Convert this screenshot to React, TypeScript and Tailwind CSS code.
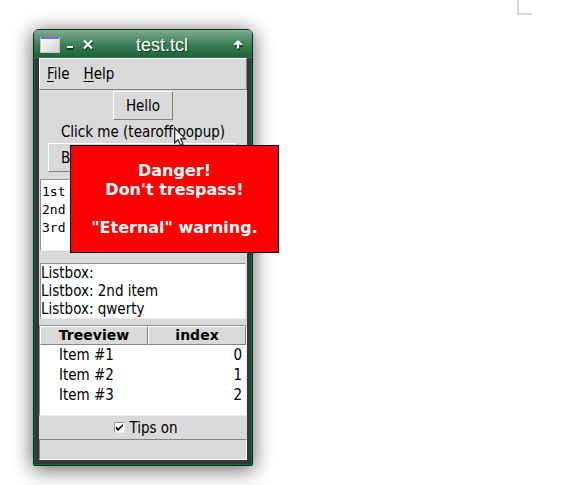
import { useState } from "react";

const rows = [
  { name: "Item #1", index: 0 },
  { name: "Item #2", index: 1 },
  { name: "Item #3", index: 2 },
];

const listItems = ["Listbox:", "Listbox: 2nd item", "Listbox: qwerty"];

const raised = "border border-t-white border-l-white border-r-[#828282] border-b-[#828282]";
const sunken = "border border-t-[#929292] border-l-[#929292] border-r-[#ebebeb] border-b-[#ebebeb]";

function TitleBar() {
  return (
    <header className="flex h-7 items-center rounded-t-sm border-t border-[#7fae90] bg-linear-to-b from-[#7aa98b] via-[#3d7f57] via-50% to-[#176235] pl-1.5 pr-2 shadow-[inset_0_-1px_0_#2c7a4b]">
      <svg width="20" height="17" viewBox="0 0 20 17" aria-hidden="true">
        <defs>
          <linearGradient id="face" x1="0" y1="0" x2="1" y2="1">
            <stop offset="0" stopColor="#ffffff" />
            <stop offset="1" stopColor="#cfcfcb" />
          </linearGradient>
        </defs>
        <rect x="0.5" y="0.5" width="19" height="16" fill="url(#face)" stroke="#c4c6c2" />
        <rect x="0" y="0" width="20" height="1" fill="#7c8798" />
        <rect x="1" y="1" width="18" height="2" fill="#5b84bd" />
      </svg>
      <button aria-label="Minimize" className="ml-1.5 flex h-5 w-2 items-center justify-center">
        <svg width="8" height="12" viewBox="0 0 8 12">
          <rect x="1" y="8" width="7" height="3" fill="#0c4422" />
          <rect x="1" y="7" width="6" height="2" fill="#fff" />
        </svg>
      </button>
      <button aria-label="Close" className="ml-2 flex h-5 w-3 items-center justify-center">
        <svg width="12" height="12" viewBox="0 0 12 12" fill="none">
          <path d="M2.500 2.500 10.500 10.500M10.500 2.500 2.500 10.500" stroke="#0c4422" strokeWidth="2.6" />
          <path d="M2 1.500 10 9.500M10 1.500 2 9.500" stroke="#fff" strokeWidth="2.2" />
        </svg>
      </button>
      <h1 className="grow pr-0.5 text-center font-['Liberation_Sans',sans-serif] text-lg leading-6 text-white [text-shadow:1px_1px_1px_#0a3d1e]">
        test.tcl
      </h1>
      <button aria-label="Maximize" className="flex h-5 w-3 items-center justify-center">
        <svg width="12" height="12" viewBox="0 0 12 12">
          <path d="M6.500 2.500 11 7 9.500 8.500 8 7.500V11H5V7.500L3.500 8.500 2 7Z" fill="#0c4422" />
          <path d="M6 1 10.300 5.200 9.300 6.300 7.200 5.200V9.500H4.800V5.200L2.700 6.300 1.700 5.200Z" fill="#fff" />
        </svg>
      </button>
    </header>
  );
}

export default function App() {
  const [tips, setTips] = useState(true);

  return (
    <main className="flex min-h-screen items-start justify-between overflow-hidden bg-white pl-[33px] pr-14 font-['DejaVu_Sans_Condensed','DejaVu_Sans',sans-serif] text-[15px] leading-[18px] text-black">
      <div className="relative mt-[29px] w-[220px]">
        <section className="rounded-t-md rounded-b-xs border border-[#05301a] bg-[#34383d] shadow-[0_3px_20px_1px_rgba(0,0,0,0.6)]">
          <TitleBar />
          <div className="border border-t-0 border-[#0b6b38] px-1 pb-1">
            <div className="bg-[#d9d9d9]">
              <nav className={`flex h-8 items-center gap-3.5 px-[7px] ${raised}`}>
                <button className="underline-offset-2">
                  <u>F</u>ile
                </button>
                <button className="underline-offset-2">
                  <u>H</u>elp
                </button>
              </nav>

              <div className="flex flex-col items-center px-[9px] pt-px">
                <button className={`h-[29px] w-[60px] ${raised}`}>Hello</button>
                <p className="h-[23px] pt-[3px] whitespace-nowrap">Click me (tearoff popup)</p>
                <button className={`h-[29px] w-full px-3 text-left ${raised}`}>B</button>
              </div>

              <div className="flex flex-col gap-3 px-px pt-[7px]">
                <textarea
                  aria-label="Text"
                  defaultValue={"1st\n2nd\n3rd"}
                  className={`block h-[72px] w-full resize-none overflow-hidden bg-white px-px pt-[3px] font-['DejaVu_Sans_Mono',monospace] text-[13px] leading-[18px] outline-none ${sunken}`}
                />
                <ul aria-label="Listbox" className={`h-14 bg-white ${sunken}`}>
                  {listItems.map((item) => (
                    <li key={item}>{item}</li>
                  ))}
                </ul>
              </div>

              <div className="mt-1.5 h-[91px] border border-t-[#929292] border-r-[#ebebeb] border-b-[#ebebeb] border-l-[#929292] bg-white">
                <table className="w-full table-fixed border-separate border-spacing-0">
                  <thead className="bg-[#d9d9d9] font-['DejaVu_Sans',sans-serif] text-sm">
                    <tr className="h-[19px]">
                      <th className={`w-[108px] p-0 pb-px leading-4 ${raised}`}>Treeview</th>
                      <th className={`p-0 pb-px leading-4 ${raised}`}>index</th>
                    </tr>
                  </thead>
                  <tbody>
                    {rows.map((row) => (
                      <tr key={row.name} className="h-5">
                        <td className="p-0 pl-[19px]">{row.name}</td>
                        <td className="p-0 pr-1 text-right">{row.index}</td>
                      </tr>
                    ))}
                  </tbody>
                </table>
              </div>

              <label className="flex h-[23px] items-center justify-center gap-1 pl-1.5">
                <span className="relative flex">
                  <input
                    type="checkbox"
                    checked={tips}
                    onChange={(e) => setTips(e.target.checked)}
                    className={`size-[11px] appearance-none bg-white ${sunken}`}
                  />
                  {tips && (
                    <svg className="pointer-events-none absolute inset-0" width="11" height="11" viewBox="0 0 11 11">
                      <path d="M2 4V7L4 9 9 4V2L4 6.500Z" fill="#000" />
                    </svg>
                  )}
                </span>
                Tips on
              </label>
              <footer className="h-[21px] border border-t-[#828282] border-r-white border-b-white border-l-[#828282]" />
            </div>
          </div>
        </section>

        <div
          role="tooltip"
          className="absolute top-[116px] left-[37px] h-[108px] w-[209px] border border-black bg-[#ff0000] pt-[15px] text-center font-['DejaVu_Sans',sans-serif] text-base leading-[19px] font-bold whitespace-pre text-white"
        >
          {'Danger!\nDon\'t trespass!\n\n"Eternal" warning.'}
        </div>

        <svg className="absolute top-[98px] left-[141px]" width="13" height="20" viewBox="0 0 13 20" aria-hidden="true">
          <path
            d="M.7 1V16L4 12.700 6.500 18.300 9 17.200 6.600 11.800H11.300Z"
            fill="#fff"
            stroke="#222"
            strokeWidth="1.2"
          />
        </svg>
      </div>

      <div className="h-[15px] w-[15px] border-b-2 border-l-2 border-[#d8d8d8]" />
    </main>
  );
}
